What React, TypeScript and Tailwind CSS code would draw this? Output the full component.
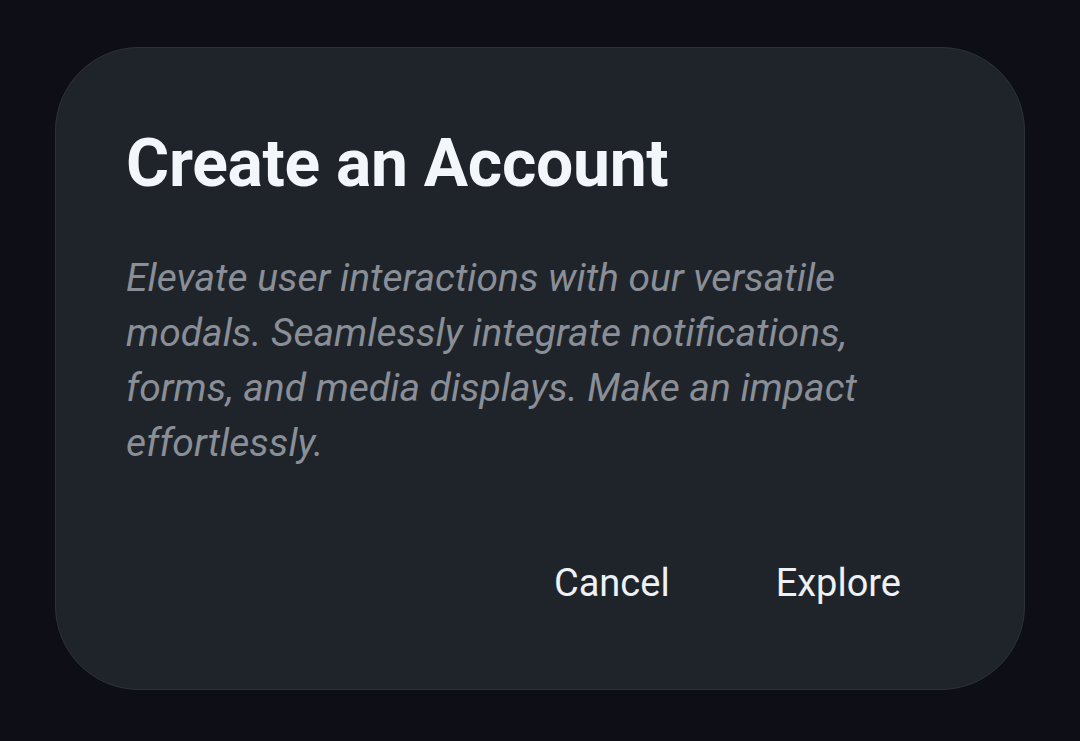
export default function App() {
  return (
    <div
      className="w-[1080px] h-[741px] bg-[#0e0e17] flex items-start justify-center pt-[47px]"
      style={{ fontFamily: "Roboto, 'Noto Sans', sans-serif" }}
    >
      <div className="w-[970px] h-[643px] bg-[#1f242b] border border-[#2d3139] rounded-[84px] flex flex-col pl-[70px] pr-[70px] pt-[83px]">
        <h1 className="text-[66px] leading-[66px] font-bold text-[#f3f6fa] tracking-[-0.3px]">
          Create an Account
        </h1>
        <p className="mt-[54px] text-[39px] leading-[55px] italic text-[#8a8f97] w-[780px]">
          Elevate user interactions with our versatile modals. Seamlessly integrate notifications, forms, and media displays. Make an impact effortlessly.
        </p>
        <div className="flex justify-end items-center gap-[106px] mt-[92px] pr-[53px]">
          <button className="text-[38px] leading-[40px] text-[#eef1f5]">Cancel</button>
          <button className="text-[38px] leading-[40px] text-[#eef1f5]">Explore</button>
        </div>
      </div>
    </div>
  );
}
